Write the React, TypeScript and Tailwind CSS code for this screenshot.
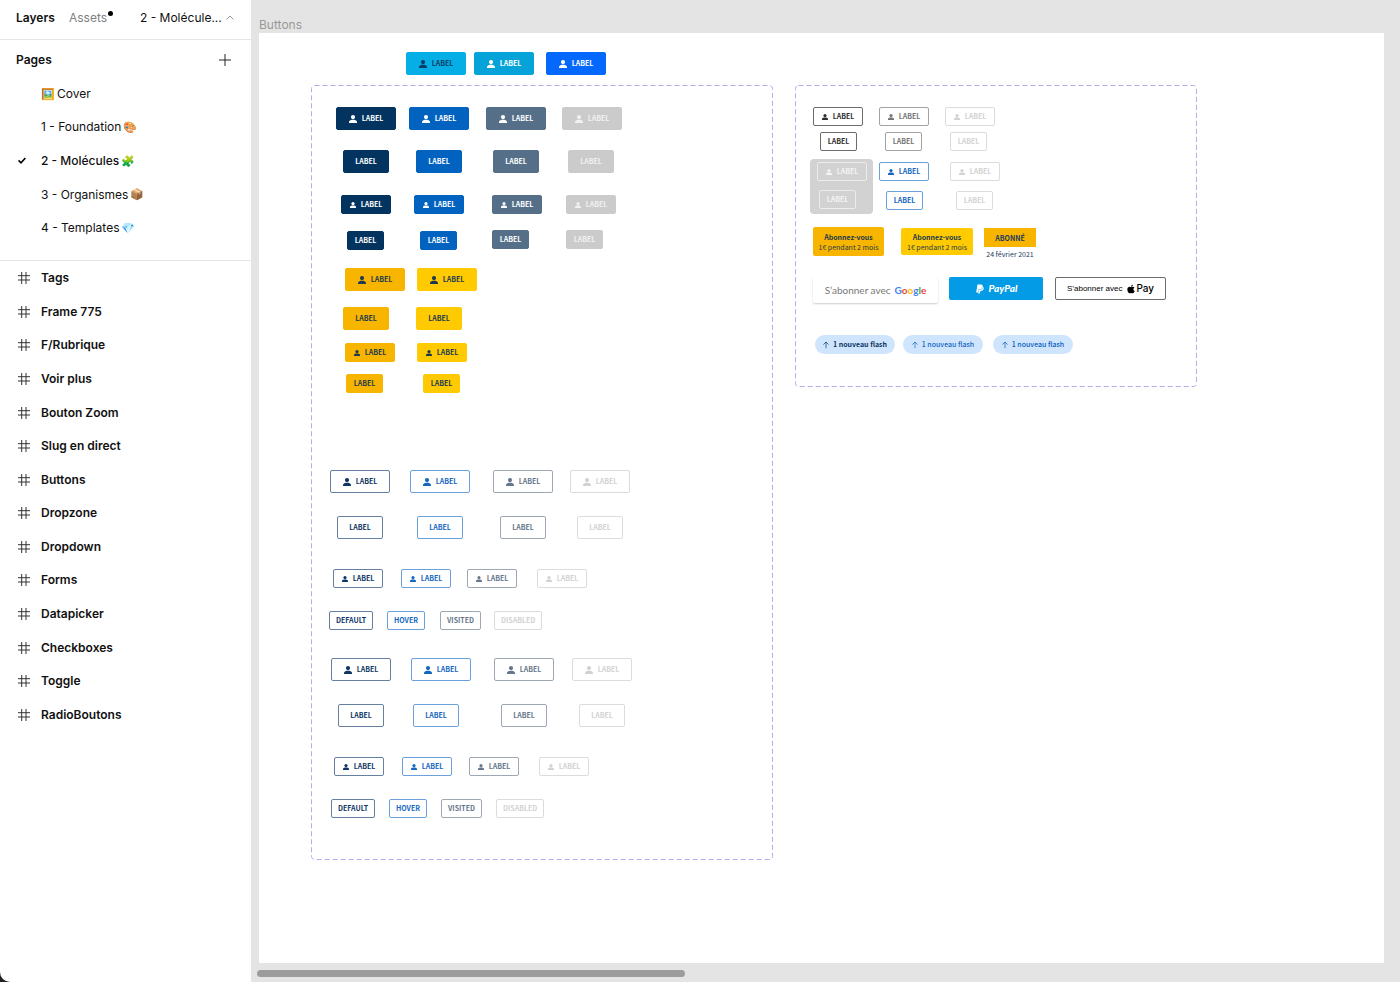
import React from "react";
import { FaApple, FaPaypal } from "react-icons/fa";

type Size = "lg" | "sm";
type Tone =
  | "cyanDark" | "cyan" | "azure"
  | "navy" | "blue" | "slate" | "gray" | "amber" | "yellow"
  | "navyLine" | "blueLine" | "slateLine" | "grayLine" | "blackLine" | "dimLine" | "whiteLine";

const tones: Record<Tone, string> = {
  cyanDark: "bg-[#06aee6] text-[#0b3f66] border-[#06aee6]",
  cyan: "bg-[#06a3d8] text-white border-[#06a3d8]",
  azure: "bg-[#0568fd] text-white border-[#0568fd]",
  navy: "bg-[#03335f] text-white border-[#03335f]",
  blue: "bg-[#0262bf] text-white border-[#0262bf]",
  slate: "bg-[#566f89] text-white border-[#566f89]",
  gray: "bg-[#cbcbcb] text-[#f1f1f1] border-[#cbcbcb]",
  amber: "bg-[#f7b500] text-[#1d3a4f] border-[#f7b500]",
  yellow: "bg-[#ffca00] text-[#1d3a4f] border-[#ffca00]",
  navyLine: "bg-white text-[#0d3664] border-[#66809f]",
  blueLine: "bg-white text-[#1467c1] border-[#6aa0dc]",
  slateLine: "bg-white text-[#66778c] border-[#9ea8b4]",
  grayLine: "bg-white text-[#d2d2d2] border-[#dcdcdc]",
  blackLine: "bg-white text-[#2e2e2e] border-[#6b6b6b]",
  dimLine: "bg-white text-[#757575] border-[#a3a3a3]",
  whiteLine: "bg-transparent text-[#f4f4f4] border-[#ececec]",
};

interface NodeSpec {
  x: number;
  y: number;
  tone: Tone;
  size?: Size;
  icon?: boolean;
  label?: string;
}

function row(y: number, xs: number[], list: Tone[], size: Size, icon: boolean, labels?: string[]): NodeSpec[] {
  return xs.map((x, i) => ({ x, y, tone: list[i], size, icon, label: labels ? labels[i] : "LABEL" }));
}

const filled: Tone[] = ["navy", "blue", "slate", "gray"];
const warm: Tone[] = ["amber", "yellow"];
const lined: Tone[] = ["navyLine", "blueLine", "slateLine", "grayLine"];
const states = ["DEFAULT", "HOVER", "VISITED", "DISABLED"];

const looseNodes: NodeSpec[] = row(19, [147, 215, 287], ["cyanDark", "cyan", "azure"], "lg", true);

const mainNodes: NodeSpec[] = [
  ...row(22, [25, 98, 175, 251], filled, "lg", true),
  ...row(65, [32, 105, 182, 257], filled, "lg", false),
  ...row(110, [30, 103, 181, 255], filled, "sm", true),
  ...row(146, [36, 109], ["navy", "blue"], "sm", false),
  ...row(145, [181, 255], ["slate", "gray"], "sm", false),
  ...row(183, [34, 106], warm, "lg", true),
  ...row(222, [32, 105], warm, "lg", false),
  ...row(258, [34, 106], warm, "sm", true),
  ...row(289, [35, 112], warm, "sm", false),
  ...row(385, [19, 99, 182, 259], lined, "lg", true),
  ...row(431, [26, 106, 189, 266], lined, "lg", false),
  ...row(484, [22, 90, 156, 226], lined, "sm", true),
  ...row(526, [18, 76, 129, 183], lined, "sm", false, states),
  ...row(573, [20, 100, 183, 261], lined, "lg", true),
  ...row(619, [27, 102, 190, 268], lined, "lg", false),
  ...row(672, [23, 91, 158, 228], lined, "sm", true),
  ...row(714, [20, 78, 130, 185], lined, "sm", false, states),
];

const sideNodes: NodeSpec[] = [
  ...row(22, [18, 84, 150], ["blackLine", "dimLine", "grayLine"], "sm", true),
  ...row(47, [25, 90, 155], ["blackLine", "dimLine", "grayLine"], "sm", false),
  ...row(77, [22, 84, 155], ["whiteLine", "blueLine", "grayLine"], "sm", true),
  ...row(106, [91, 161], ["blueLine", "grayLine"], "sm", false),
  ...row(105, [24], ["whiteLine"], "sm", false),
];

const labelFont = "font-['Noto_Sans_CJK_SC',sans-serif]";

function Placed({ x, y, children }: { x: number; y: number; children: React.ReactNode }) {
  return (
    <div className="absolute" style={{ left: x, top: y }}>
      {children}
    </div>
  );
}

function PersonIcon({ size }: { size: Size }) {
  return (
    <svg aria-hidden viewBox="0 0 16 16" fill="currentColor" className={size === "lg" ? "size-2 shrink-0" : "size-[6px] shrink-0"}>
      <circle cx="8" cy="4.2" r="4.2" />
      <path d="M0 16v-2.4C0 10.6 4.6 9.4 8 9.4s8 1.2 8 4.2V16z" />
    </svg>
  );
}

function widthOf(size: Size, icon: boolean, label: string) {
  if (icon) return size === "lg" ? "w-[60px]" : "w-[50px]";
  if (label === "LABEL") return size === "lg" ? "w-[46px]" : "w-[37px]";
  return "px-1.5";
}

function KitButton({ tone, size = "lg", icon = false, label = "LABEL" }: Omit<NodeSpec, "x" | "y">) {
  const height = size === "lg" ? "h-[23px]" : "h-[19px]";
  return (
    <button
      type="button"
      disabled={tone === "gray" || tone === "grayLine"}
      className={`flex items-center justify-center gap-[5px] rounded-[2px] border text-[7px] leading-none font-bold whitespace-nowrap ${labelFont} ${height} ${widthOf(size, icon, label)} ${tones[tone]}`}
    >
      {icon && <PersonIcon size={size} />}
      <span>{label}</span>
    </button>
  );
}

function Nodes({ items }: { items: NodeSpec[] }) {
  return (
    <>
      {items.map(({ x, y, ...rest }) => (
        <Placed key={`${x}-${y}`} x={x} y={y}>
          <KitButton {...rest} />
        </Placed>
      ))}
    </>
  );
}

function DashedOutline() {
  return (
    <svg aria-hidden className="pointer-events-none absolute inset-0 size-full overflow-visible">
      <rect x="0.5" y="0.5" width="100%" height="100%" rx="3" fill="none" stroke="#b9abea" strokeDasharray="5 3" />
    </svg>
  );
}

function SubscribeCard({ tone, size }: { tone: string; size: string }) {
  return (
    <button type="button" className={`flex flex-col items-center justify-center rounded-[2px] text-[7px] leading-[10px] whitespace-nowrap text-[#1d3a4f] ${labelFont} ${tone} ${size}`}>
      <span className="font-bold">Abonnez-vous</span>
      <span>1€ pendant 2 mois</span>
    </button>
  );
}

function FlashPill({ color }: { color: string }) {
  return (
    <button type="button" className={`flex h-[19px] w-20 items-center justify-center gap-1 rounded-full bg-[#cfe5fd] text-[7px] leading-none whitespace-nowrap ${labelFont} ${color}`}>
      <svg aria-hidden viewBox="0 0 6 8" className="h-2 w-1.5" fill="none" stroke="currentColor" strokeWidth="0.7">
        <path d="M3 7.2V1M0.4 3.6 3 1l2.6 2.6" />
      </svg>
      <span>1 nouveau flash</span>
    </button>
  );
}

function GoogleWord() {
  return (
    <span className="font-bold">
      <span className="text-[#4285f4]">G</span>
      <span className="text-[#ea4335]">o</span>
      <span className="text-[#fbbc05]">o</span>
      <span className="text-[#4285f4]">g</span>
      <span className="text-[#34a853]">l</span>
      <span className="text-[#ea4335]">e</span>
    </span>
  );
}

function SideSet() {
  return (
    <section aria-label="Secondary buttons" className="absolute top-[52px] left-[536px] h-[301px] w-[401px]">
      <DashedOutline />
      <div className="absolute top-[74px] left-[15px] h-[55px] w-[63px] rounded-[4px] bg-[#d2d2d2]" />
      <Nodes items={sideNodes} />
      <Placed x={18} y={142}>
        <SubscribeCard tone="bg-[#f7b500]" size="h-[29px] w-[71px]" />
      </Placed>
      <Placed x={106} y={143}>
        <SubscribeCard tone="bg-[#ffca00]" size="h-[27px] w-[72px]" />
      </Placed>
      <Placed x={189} y={143}>
        <div className={`flex w-[52px] flex-col items-center text-[7px] leading-[10px] whitespace-nowrap text-[#1d3a5f] ${labelFont}`}>
          <button type="button" className="flex h-[19px] w-full items-center justify-center bg-[#f7b500] font-bold">ABONNÉ</button>
          <span className="pt-0.5">24 février 2021</span>
        </div>
      </Placed>
      <Placed x={18} y={192}>
        <button type="button" className="flex h-[26px] w-[125px] items-center justify-center gap-1 rounded-[2px] bg-white font-['Lato',sans-serif] text-[10px] whitespace-nowrap text-[#777777] shadow-[0_1px_2px_rgba(0,0,0,0.2)]">
          <span>S’abonner avec</span>
          <GoogleWord />
        </button>
      </Placed>
      <Placed x={154} y={192}>
        <button type="button" className="flex h-[23px] w-[94px] items-center justify-center gap-1 rounded-[2px] bg-[#039be5] font-['Lato',sans-serif] text-[10px] font-black text-white italic">
          <FaPaypal aria-hidden className="size-[10px]" />
          <span>PayPal</span>
        </button>
      </Placed>
      <Placed x={260} y={192}>
        <button type="button" className="flex h-[23px] w-[111px] items-center justify-center gap-1 rounded-[2px] border border-[#6b6b6b] bg-white text-[8px] whitespace-nowrap text-black">
          <span className="font-['Liberation_Sans',sans-serif]">S’abonner avec</span>
          <span className="flex items-center font-['Inter',sans-serif] text-[10px] font-medium">
            <FaApple aria-hidden className="size-[10px]" />
            Pay
          </span>
        </button>
      </Placed>
      <Placed x={20} y={250}>
        <FlashPill color="text-[#0d3664] font-bold" />
      </Placed>
      <Placed x={108} y={250}>
        <FlashPill color="text-[#1467c1] font-medium" />
      </Placed>
      <Placed x={198} y={250}>
        <FlashPill color="text-[#0a5ac0] font-medium" />
      </Placed>
    </section>
  );
}

interface Page {
  name: string;
  before?: string;
  after?: string;
}

const pages: Page[] = [
  { before: "🖼️", name: "Cover" },
  { name: "1 - Foundation", after: "🎨" },
  { name: "2 - Molécules", after: "🧩" },
  { name: "3 - Organismes", after: "📦" },
  { name: "4 - Templates", after: "💎" },
];

const layers = [
  "Tags", "Frame 775", "F/Rubrique", "Voir plus", "Bouton Zoom", "Slug en direct", "Buttons",
  "Dropzone", "Dropdown", "Forms", "Datapicker", "Checkboxes", "Toggle", "RadioBoutons",
];

function FrameIcon() {
  return (
    <svg aria-hidden viewBox="0 0 12 12" className="size-3 shrink-0" fill="none" stroke="#333333">
      <path d="M3.7 0v12M8 0v12M0 3.7h12M0 8h12" />
    </svg>
  );
}

function Sidebar() {
  return (
    <aside className="flex w-[251px] shrink-0 flex-col rounded-bl-[10px] bg-white text-[12px] text-[#111111]">
      <header className="flex h-10 items-center border-b border-[#e5e5e5] pb-1 pl-4">
        <button type="button" className="w-[53px] text-left font-semibold">Layers</button>
        <button type="button" className="flex w-[71px] text-left text-[#808080]">
          Assets
          <span className="mt-0.5 ml-px size-[5px] rounded-full bg-black" />
        </button>
        <button type="button" className="flex items-center gap-1 whitespace-nowrap">
          2 - Molécule...
          <svg aria-hidden viewBox="0 0 8 5" className="h-[5px] w-2" fill="none" stroke="#999999">
            <path d="M0.5 4.5 4 1l3.5 3.5" />
          </svg>
        </button>
      </header>
      <section className="border-b border-[#e5e5e5] pb-[15px]">
        <div className="flex h-[37px] items-center justify-between pt-0.5 pr-5 pl-4">
          <h2 className="font-semibold">Pages</h2>
          <button type="button" aria-label="Add page">
            <svg aria-hidden viewBox="0 0 12 12" className="size-3" fill="none" stroke="#222222">
              <path d="M6 0v12M0 6h12" />
            </svg>
          </button>
        </div>
        <ul className="grid h-[168px] auto-rows-fr">
          {pages.map(({ name, before, after }, i) => (
            <li key={name} className="grid">
              <button type="button" className={`flex items-center gap-0.5 pl-[18px] text-left ${i === 2 ? "font-medium" : ""}`}>
                <span className="w-[21px]">
                  {i === 2 && (
                    <svg aria-hidden viewBox="0 0 8 7" className="h-[7px] w-2" fill="none" stroke="#000000" strokeWidth="1.6">
                      <path d="M0.6 3.4 3 5.8 7.4 1" />
                    </svg>
                  )}
                </span>
                {before && <span className="text-[11px]">{before}</span>}
                <span>{name}</span>
                {after && <span className="text-[11px]">{after}</span>}
              </button>
            </li>
          ))}
        </ul>
      </section>
      <ul className="grid h-[470px] auto-rows-fr">
        {layers.map((layer) => (
          <li key={layer} className="grid">
            <button type="button" className="flex items-center gap-[11px] pt-px pl-[18px] text-left font-semibold">
              <FrameIcon />
              {layer}
            </button>
          </li>
        ))}
      </ul>
    </aside>
  );
}

export default function App() {
  return (
    <div className="flex min-h-screen bg-[#222222] font-['Inter',sans-serif]">
      <Sidebar />
      <main className="flex min-w-0 flex-1 flex-col bg-[#e4e4e4] pb-[5px] pl-2">
        <h1 className="flex h-[33px] items-end pb-px text-[12px] leading-[14px] text-[#999999]">Buttons</h1>
        <div className="relative mr-4 min-h-[860px] flex-1 bg-white">
          <Nodes items={looseNodes} />
          <section aria-label="Primary buttons" className="absolute top-[52px] left-[52px] h-[774px] w-[461px]">
            <DashedOutline />
            <Nodes items={mainNodes} />
          </section>
          <SideSet />
        </div>
        <div className="mt-[7px] -ml-0.5 h-[7px] w-3/8 rounded-full bg-[#9c9c9c]" />
      </main>
    </div>
  );
}
